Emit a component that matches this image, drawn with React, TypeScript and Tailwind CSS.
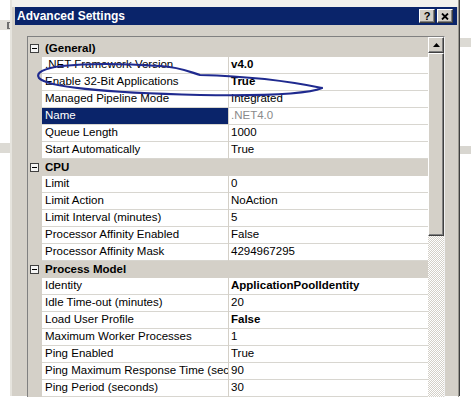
import React from "react";

type Row = { label: string; value: string; bold?: boolean; selected?: boolean };
type Category = { title: string; rows: Row[] };

const categories: Category[] = [
  {
    title: "(General)",
    rows: [
      { label: ".NET Framework Version", value: "v4.0", bold: true },
      { label: "Enable 32-Bit Applications", value: "True", bold: true },
      { label: "Managed Pipeline Mode", value: "Integrated" },
      { label: "Name", value: ".NET4.0", selected: true },
      { label: "Queue Length", value: "1000" },
      { label: "Start Automatically", value: "True" },
    ],
  },
  {
    title: "CPU",
    rows: [
      { label: "Limit", value: "0" },
      { label: "Limit Action", value: "NoAction" },
      { label: "Limit Interval (minutes)", value: "5" },
      { label: "Processor Affinity Enabled", value: "False" },
      { label: "Processor Affinity Mask", value: "4294967295" },
    ],
  },
  {
    title: "Process Model",
    rows: [
      { label: "Identity", value: "ApplicationPoolIdentity", bold: true },
      { label: "Idle Time-out (minutes)", value: "20" },
      { label: "Load User Profile", value: "False", bold: true },
      { label: "Maximum Worker Processes", value: "1" },
      { label: "Ping Enabled", value: "True" },
      { label: "Ping Maximum Response Time (seconds)", value: "90" },
      { label: "Ping Period (seconds)", value: "30" },
    ],
  },
];

const raised =
  "bg-[#d4d0c8] border border-t-white border-l-white border-r-[#404040] border-b-[#404040] shadow-[inset_-1px_-1px_0_#808080]";

function CategoryRow({ title }: { title: string }) {
  return (
    <div className="flex h-[17px] items-center bg-[#d4d0c8]">
      <div className="w-[14px] flex items-center">
        <div className="ml-[2px] w-[9px] h-[9px] border border-[#404040] bg-[#f4f4f4] flex items-center justify-center">
          <div className="w-[5px] h-px bg-black" />
        </div>
      </div>
      <span className="pl-[3px] font-bold text-[11.5px] text-black">{title}</span>
    </div>
  );
}

function PropRow({ row }: { row: Row }) {
  return (
    <div className="flex h-[17px]">
      <div className="w-[14px] bg-[#d4d0c8]" />
      <div
        className={`w-[186px] border-b border-[#d8d6d0] pl-[3px] flex items-center overflow-hidden whitespace-nowrap ${
          row.selected ? "bg-[#0a246a] text-white" : "bg-white text-black"
        }`}
      >
        {row.label}
      </div>
      <div className="w-px bg-[#d4d0c8]" />
      <div
        className={`flex-1 bg-white border-b border-[#d8d6d0] pl-[2px] flex items-center whitespace-nowrap ${
          row.bold ? "font-bold" : ""
        } ${row.selected ? "text-[#8a8a8a]" : "text-black"}`}
      >
        {row.value}
      </div>
    </div>
  );
}

function Scrollbar() {
  return (
    <div className="w-[16px] flex flex-col">
      <div className={`h-[16px] ${raised} flex items-center justify-center`}>
        <svg width="7" height="4" viewBox="0 0 7 4">
          <polygon points="3.5,0 7,4 0,4" fill="black" />
        </svg>
      </div>
      <div className={`h-[183px] ${raised}`} />
      <div className="flex-1 bg-[repeating-conic-gradient(#d4d0c8_0_25%,#ffffff_0_50%)] bg-[length:2px_2px]" />
    </div>
  );
}

function TitleButton({ children }: { children: React.ReactNode }) {
  return <div className={`w-[16px] h-[14px] ${raised} flex items-center justify-center`}>{children}</div>;
}

export default function App() {
  return (
    <div className="relative w-[471px] h-[420px] bg-white overflow-hidden flex items-start font-['Liberation_Sans',Arial,sans-serif] text-[11.5px]">
      {/* window behind, left */}
      <div className="w-[10px] h-[396px] flex flex-col">
        <div className="h-[20px]" />
        <div className="h-[10px] bg-[#e2e0da] flex justify-end items-center">
          <div className="w-[3px] h-[7px] border-l-2 border-t border-b border-[#707070]" />
        </div>
        <div className="h-[113px]" />
        <div className="h-[10px] bg-[#dcdad4]" />
      </div>

      {/* dialog */}
      <div className="w-[450px] h-[396px] flex flex-col border-l-2 border-l-[#e6e4de] border-r border-r-[#404040] bg-[#d4d0c8]">
        <div className="border-r border-r-[#9a9890] flex-1 flex flex-col">
          <div className="h-[7px] bg-[#f2f1ed]" />
          <div className="h-[18px] ml-[3px] mr-[1px] bg-[#0a246a] flex items-center justify-between">
            <span className="pl-[2px] text-white font-bold text-[12px]">Advanced Settings</span>
            <div className="flex gap-[2px] pr-[4px]">
              <TitleButton>
                <span className="font-bold text-[11px] leading-none text-black">?</span>
              </TitleButton>
              <TitleButton>
                <svg width="8" height="7" viewBox="0 0 8 7">
                  <path d="M1 0.5 L7 6.5 M7 0.5 L1 6.5" stroke="black" strokeWidth="1.8" />
                </svg>
              </TitleButton>
            </div>
          </div>

          <div className="flex-1 flex pl-[15px] pt-[11px] pr-[12px]">
            <div className="w-[418px] flex border-t border-l border-[#808080] border-r border-r-[#f0f0f0]">
              <div className="w-[400px] bg-[#d4d0c8] pt-[3px] flex flex-col">
                {categories.map((c) => (
                  <React.Fragment key={c.title}>
                    <CategoryRow title={c.title} />
                    {c.rows.map((r) => (
                      <PropRow key={r.label} row={r} />
                    ))}
                  </React.Fragment>
                ))}
              </div>
              <Scrollbar />
            </div>
          </div>
        </div>
      </div>

      {/* window behind, right */}
      <div className="w-[11px] h-[396px] flex flex-col">
        <div className="h-[38px]" />
        <div className="h-[9px] bg-[#dcdad4]" />
        <div className="h-[99px]" />
        <div className="h-[8px] bg-[#d8d6d0]" />
      </div>

      {/* hand-drawn ink mark */}
      <svg className="absolute left-0 top-0 pointer-events-none" width="471" height="420" viewBox="0 0 471 420">
        <path
          d="M322 88 C284 80 240 76 200 75 C190 72 180 67 160 66 C130 64 90 63 62 66 C44 68 35 73 39 78 C48 88 120 93 200 95 C262 96 308 94 322 88"
          fill="none"
          stroke="#1f2a8f"
          strokeWidth="2.2"
          strokeLinecap="round"
        />
      </svg>
    </div>
  );
}
